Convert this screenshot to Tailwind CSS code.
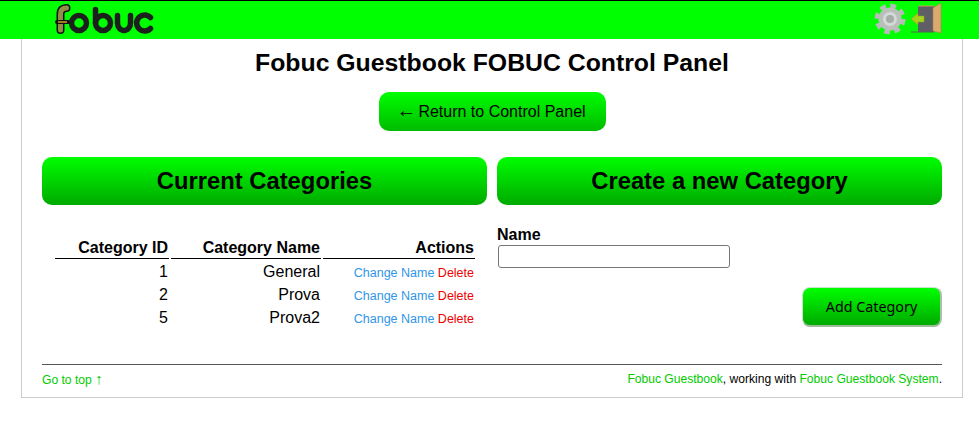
<!DOCTYPE html>
<html>
<head>
<meta charset="utf-8">
<script src="https://cdn.jsdelivr.net/npm/@tailwindcss/browser@4"></script>
</head>
<body class="bg-white font-['Liberation_Sans',sans-serif] text-black overflow-hidden">
<div class="h-[423px] w-[979px] flex flex-col">
  <header class="h-[39px] shrink-0 bg-[#00ff00] border-t border-black flex items-center justify-between pl-[54px] pr-[37px]">
    <svg width="102" height="32" viewBox="54 4 102 32" fill="none">
      <g stroke="#1c201d" stroke-width="5.5" stroke-linecap="round">
        <circle cx="79" cy="23" r="7.5"/>
        <path d="M95.5 9.5V23"/>
        <circle cx="103" cy="23" r="7.5"/>
        <path d="M117.5 15.5V23a6.5 7.5 0 0 0 13 0V15.5"/>
        <path d="M150.5 17.5a8 8 0 1 0 0 11"/>
      </g>
      <path d="M60.5 30V14c0-4 2-6 6-6" stroke="#111" stroke-width="8" stroke-linecap="round"/>
      <path d="M60.5 30V14c0-4 2-6 6-6" stroke="#8f8f45" stroke-width="5" stroke-linecap="round"/>
      <path d="M57 22h11" stroke="#111" stroke-width="4" stroke-linecap="round"/>
      <path d="M58 22h9" stroke="#d0a030" stroke-width="1.5"/>
    </svg>
    <div class="flex items-center gap-[4px] mt-[-2px]">
      <svg width="32" height="32" viewBox="0 0 32 32" fill="none">
        <circle cx="16" cy="16" r="13" stroke="#b5bbb6" stroke-width="5" stroke-dasharray="5.6 4.61"/>
        <circle cx="16" cy="16" r="11.5" fill="#b9bfba"/>
        <circle cx="16" cy="16" r="7" fill="#d6dad6"/>
        <circle cx="16" cy="16" r="4" fill="#a6aca7"/>
      </svg>
      <svg width="32" height="32" viewBox="910 3 32 32">
        <path d="M918 6H934V32H918Z" fill="#5f5d66"/>
        <path d="M918 6H934" stroke="#c9995c" stroke-width="1"/>
        <path d="M933 8L941 3V33L933 31Z" fill="#dcaa6e" stroke="#b08048" stroke-width=".6"/>
        <path d="M911 19l7-6v3h6v6h-6v3z" fill="#a6cf1e" stroke="#86a818" stroke-width=".5"/>
        <path d="M911 32H934" stroke="#4d6a4d" stroke-width="1"/>
      </svg>
    </div>
  </header>
  <main class="w-[942px] ml-[21px] h-[359px] border border-t-0 border-[#ccc] px-[20px] flex flex-col">
    <h1 class="text-[24.8px] leading-[28px] font-bold text-center mt-[10px]">Fobuc Guestbook FOBUC Control Panel</h1>
    <div class="flex justify-center mt-[15px]">
      <a class="w-[227px] h-[39px] rounded-[10px] bg-gradient-to-b from-[#00ff00] to-[#00bb00] flex items-center justify-center text-[16px] text-black"><span class="font-['Liberation_Serif',serif] text-[20px] leading-none mb-[4px] ml-[-2px] mr-[2px]">←</span><span>Return to Control Panel</span></a>
    </div>
    <div class="grid grid-cols-2 gap-[10px] mt-[26px]">
      <section>
        <h2 class="h-[48px] rounded-[10px] bg-gradient-to-b from-[#00ff00] to-[#00aa00] flex items-center justify-center text-[23.8px] font-bold">Current Categories</h2>
        <table class="mt-[33px] ml-[11px] w-[424px] border-separate border-spacing-x-[2px] border-spacing-y-0 text-right">
          <thead>
            <tr class="text-[16px] font-bold">
              <th class="w-[114px] border-b border-black h-[21px] leading-[20px] pr-[1px] text-right">Category ID</th>
              <th class="w-[150px] border-b border-black leading-[20px] pr-[1px] text-right">Category Name</th>
              <th class="border-b border-black leading-[20px] pr-[1px] text-right">Actions</th>
            </tr>
          </thead>
          <tbody class="text-[16px] leading-[20px]">
            <tr class="h-[23px]"><td class="pr-[1px] pt-[3px]">1</td><td class="pr-[1px] pt-[3px]">General</td><td class="pr-[1px] text-[12.5px] leading-[16px] pt-[4px]"><a class="text-[#2f96e8]">Change Name</a> <a class="text-[#ee0000]">Delete</a></td></tr>
            <tr class="h-[23px]"><td class="pr-[1px] pt-[3px]">2</td><td class="pr-[1px] pt-[3px]">Prova</td><td class="pr-[1px] text-[12.5px] leading-[16px] pt-[4px]"><a class="text-[#2f96e8]">Change Name</a> <a class="text-[#ee0000]">Delete</a></td></tr>
            <tr class="h-[23px]"><td class="pr-[1px] pt-[3px]">5</td><td class="pr-[1px] pt-[3px]">Prova2</td><td class="pr-[1px] text-[12.5px] leading-[16px] pt-[4px]"><a class="text-[#2f96e8]">Change Name</a> <a class="text-[#ee0000]">Delete</a></td></tr>
          </tbody>
        </table>
      </section>
      <section>
        <h2 class="h-[48px] rounded-[10px] bg-gradient-to-b from-[#00ff00] to-[#00aa00] flex items-center justify-center text-[23.8px] font-bold">Create a new Category</h2>
        <label class="block text-[16px] leading-[18px] font-bold mt-[21px]">Name</label>
        <input type="text" class="block w-[232px] h-[23px] mt-[1px] ml-[1px] rounded-[3px] border border-[#767676] bg-white">
        <div class="flex justify-end mt-[19px]">
          <button class="w-[140px] h-[40px] rounded-[8px] border border-r-2 border-b-2 border-t-[#c8e4c8] border-l-[#c8e4c8] border-r-[#a8c4a8] border-b-[#9cbc9c] bg-gradient-to-b from-[#00ff00] to-[#00aa00] font-['Noto_Sans',sans-serif] text-[14.3px] text-black">Add Category</button>
        </div>
      </section>
    </div>
    <footer class="mt-auto mb-[11px] h-[22px] border-t border-[#555] pt-[7px] flex justify-between text-[12.1px] leading-[14px]">
      <a class="text-[#00cc00]">Go to top <span class="font-['Liberation_Serif',serif] text-[15px] leading-none">↑</span></a>
      <p><a class="text-[#00cc00]">Fobuc Guestbook</a>, working with <a class="text-[#00cc00]">Fobuc Guestbook System</a>.</p>
    </footer>
  </main>
</div>
</body>
</html>
